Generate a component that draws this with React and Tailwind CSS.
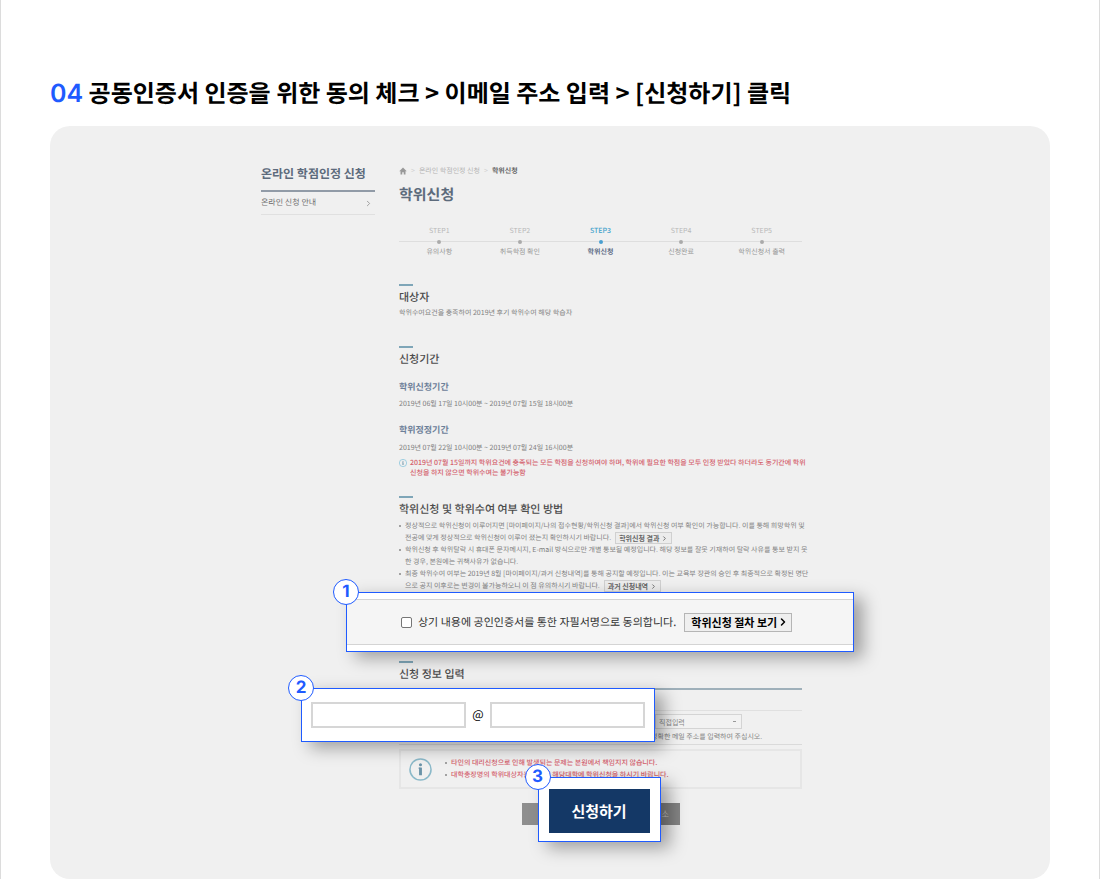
import React from "react";
import { ChevronRight } from "lucide-react";

const steps = [
  { label: "STEP1", name: "유의사항" },
  { label: "STEP2", name: "취득학점 확인" },
  { label: "STEP3", name: "학위신청", active: true },
  { label: "STEP4", name: "신청완료" },
  { label: "STEP5", name: "학위신청서 출력" },
];

function SectionTitle({ children }) {
  return (
    <>
      <div className="h-[2px] w-[14px] bg-[#7fa6b8]" />
      <h3 className="mt-[3px] text-[11px] leading-4 font-medium whitespace-nowrap text-[#4c4c4c]">{children}</h3>
    </>
  );
}

function Badge({ children }) {
  return (
    <span className="absolute -top-[14px] -left-[14px] flex size-[26px] items-center justify-center rounded-full border border-[#1f5bff] bg-white font-[Inter,sans-serif] text-[17px] leading-none font-bold text-[#1f5bff]">
      {children}
    </span>
  );
}

function InlineButton({ children }) {
  return (
    <button
      type="button"
      className="ml-1 inline-flex h-3 items-center gap-[2px] border border-[#d0d0d0] bg-[#ececec] px-[3px] align-top text-[7px] leading-none font-bold text-[#666]"
    >
      {children}
      <ChevronRight size={7} strokeWidth={3} />
    </button>
  );
}

function Bullet({ children }) {
  return (
    <li className="flex gap-1">
      <span className="mt-[5px] size-[2px] shrink-0 rounded-full bg-[#888]" />
      <span>{children}</span>
    </li>
  );
}

function HomeIcon() {
  return (
    <svg viewBox="0 0 16 16" className="size-2 text-[#999]" fill="currentColor" aria-hidden="true">
      <path d="M8 1 0.5 8.5H3V15h3.5v-4.5h3V15H13V8.5h2.5z" />
    </svg>
  );
}

function InfoIcon({ className }) {
  return (
    <svg viewBox="0 0 24 24" className={className} fill="none" aria-hidden="true">
      <circle cx="12" cy="12" r="11" stroke="currentColor" strokeWidth="1.6" />
      <path d="M12 10v8" stroke="#6a93a8" strokeWidth="3" />
      <path d="M10 10.6h2" stroke="#6a93a8" strokeWidth="1.2" />
      <circle cx="12" cy="7" r="1.6" fill="#6a93a8" />
    </svg>
  );
}

export default function App() {
  return (
    <div className="border-x border-[#dcdcdc] bg-white px-[49px] pt-[76px] font-['Noto_Sans_CJK_KR',sans-serif] [text-rendering:geometricPrecision]">
      <h1 className="text-[24px] leading-8 font-bold text-black">
        <span className="font-[Inter,sans-serif] text-[25px] font-semibold text-[#1f5bff]">04</span>{" "}
        공동인증서 인증을 위한 동의 체크 &gt; 이메일 주소 입력 &gt; [신청하기] 클릭
      </h1>

      <div className="mt-4 flex justify-center rounded-[20px] bg-[#f0f0f0] pt-10 pr-[37px] pb-[54px]">
        <div className="flex w-full max-w-[541px] gap-6">
          <aside className="w-[114px] shrink-0">
            <h2 className="border-b-2 border-[#919ba7] pb-2 text-[12px] leading-4 font-bold whitespace-nowrap text-[#5d6b7c]">
              온라인 학점인정 신청
            </h2>
            <a href="#guide" className="flex h-[23px] items-center justify-between border-b border-[#e0e0e0] pr-[2px] text-[8px] text-[#707070]">
              온라인 신청 안내
              <ChevronRight size={9} strokeWidth={2} className="text-[#888]" />
            </a>
          </aside>

          <main className="min-w-0 flex-1 text-[7px] leading-[10px] text-[#808080]">
            <nav className="flex h-[10px] items-center gap-1 text-[#b4b4b4]">
              <HomeIcon />
              <span className="text-[#d0d0d0]">&gt;</span>
              <span>온라인 학점인정 신청</span>
              <span className="text-[#d0d0d0]">&gt;</span>
              <span className="font-bold text-[#666]">학위신청</span>
            </nav>
            <h2 className="mt-[9px] text-[15px] leading-5 font-bold text-[#5d6b7c]">학위신청</h2>

            <ol className="mt-[21px] grid grid-cols-5 text-center">
              {steps.map((s) => (
                <li key={s.label} className="whitespace-nowrap">
                  <div className={s.active ? "font-medium text-[#45a3cc]" : "text-[#b8b8b8]"}>{s.label}</div>
                  <div className="flex h-[11px] items-center">
                    <span className="h-px flex-1 bg-[#dedede]" />
                    <span className={s.active ? "size-1 rounded-full bg-[#4a9fd0]" : "size-1 rounded-full bg-[#aaa]"} />
                    <span className="h-px flex-1 bg-[#dedede]" />
                  </div>
                  <div className={s.active ? "font-bold text-[#5d6b85]" : "text-[#969696]"}>{s.name}</div>
                </li>
              ))}
            </ol>

            <section className="mt-[27px]">
              <SectionTitle>대상자</SectionTitle>
              <p className="mt-[3px]">학위수여요건을 충족하여 2019년 후기 학위수여 해당 학습자</p>
            </section>

            <section className="mt-7">
              <SectionTitle>신청기간</SectionTitle>
              <h4 className="mt-[14px] text-[9px] leading-3 font-bold text-[#6d8099]">학위신청기간</h4>
              <p className="mt-[6px]">2019년 06월 17일 10시00분 ~ 2019년 07월 15일 18시00분</p>
              <h4 className="mt-[15px] text-[9px] leading-3 font-bold text-[#6d8099]">학위정정기간</h4>
              <p className="mt-[7px]">2019년 07월 22일 10시00분 ~ 2019년 07월 24일 16시00분</p>
              <div className="mt-[5px] flex gap-[3px] font-medium text-[#d4616d]">
                <InfoIcon className="mt-px size-2 shrink-0 text-[#5fb4d4]" />
                <p className="whitespace-nowrap">
                  2019년 07월 15일까지 학위요건에 충족되는 모든 학점을 신청하여야 하며, 학위에 필요한 학점을 모두 인정 받았다 하더라도 동기간에 학위
                  <br />
                  신청을 하지 않으면 학위수여는 불가능함
                </p>
              </div>
            </section>

            <section className="mt-[18px]">
              <SectionTitle>학위신청 및 학위수여 여부 확인 방법</SectionTitle>
              <ul className="mt-[3px] leading-3 whitespace-nowrap">
                <Bullet>
                  정상적으로 학위신청이 이루어지면 [마이페이지/나의 접수현황/학위신청 결과]에서 학위신청 여부 확인이 가능합니다. 이를 통해 희망학위 및
                  <br />
                  전공에 맞게 정상적으로 학위신청이 이루어 졌는지 확인하시기 바랍니다.
                  <InlineButton>학위신청 결과</InlineButton>
                </Bullet>
                <Bullet>
                  학위신청 후 학위탈락 시 휴대폰 문자메시지, E-mail 방식으로만 개별 통보될 예정입니다. 해당 정보를 잘못 기재하여 탈락 사유를 통보 받지 못
                  <br />한 경우, 본원에는 귀책사유가 없습니다.
                </Bullet>
                <Bullet>
                  최종 학위수여 여부는 2019년 8월 [마이페이지/과거 신청내역]를 통해 공지할 예정입니다. 이는 교육부 장관의 승인 후 최종적으로 확정된 명단
                  <br />
                  으로 공지 이후로는 변경이 불가능하오니 이 점 유의하시기 바랍니다.
                  <InlineButton>과거 신청내역</InlineButton>
                </Bullet>
              </ul>
            </section>

            <div className="relative h-[60px]">
              <div className="absolute top-0 -left-[53px] z-10 w-[508px] border border-[#1f5bff] bg-white py-[6px] shadow-[9px_6px_16px_rgba(0,0,0,0.34)]">
                <Badge>1</Badge>
                <div className="flex h-[46px] items-center border-y border-[#d4d4d4] bg-[#f5f5f5] pl-[54px] text-[#333]">
                  <input
                    id="agree"
                    type="checkbox"
                    className="size-[11px] appearance-none rounded-[2px] border border-[#767676] bg-white"
                  />
                  <label htmlFor="agree" className="ml-[6px] text-[11px] whitespace-nowrap">
                    상기 내용에 공인인증서를 통한 자필서명으로 동의합니다.
                  </label>
                  <button
                    type="button"
                    className="ml-2 flex h-[19px] items-center border border-[#b5b5b5] bg-[#efefef] px-[6px] text-[11px] leading-none font-bold whitespace-nowrap text-black"
                  >
                    학위신청 절차 보기
                    <ChevronRight size={12} strokeWidth={3} className="-mr-1" />
                  </button>
                </div>
              </div>
            </div>

            <section className="mt-[9px]">
              <SectionTitle>신청 정보 입력</SectionTitle>
              <div className="relative mt-[6px] border-t-2 border-b border-t-[#9fb0ba] border-b-[#dadada] pt-5">
                <div className="border-t border-[#e0e0e0] pt-[3px] pb-[2px] pl-[256px]">
                  <select
                    aria-label="메일 도메인"
                    className="block h-[15px] w-[87px] appearance-none border border-[#d4d4d4] bg-[#f2f2f2] bg-[linear-gradient(#999,#999)] bg-[length:3px_1px] bg-[position:right_5px_center] bg-no-repeat pl-[3px] text-[7px] leading-[10px] text-[#888]"
                  >
                    <option>직접입력</option>
                  </select>
                  <p className="mt-[3px] -ml-1 whitespace-nowrap">정확한 메일 주소를 입력하여 주십시오.</p>
                </div>
                <div className="absolute -top-[2px] -left-[98px] z-10 flex h-[54px] w-[354px] items-center justify-between border border-[#1f5bff] bg-white px-[9px] shadow-[9px_6px_16px_rgba(0,0,0,0.34)]">
                  <Badge>2</Badge>
                  <input type="text" aria-label="이메일 아이디" className="h-[26px] w-[155px] border-2 border-[#d6d6d6] bg-white px-1 text-xs text-black" />
                  <span className="text-[12px] text-black">@</span>
                  <input type="text" aria-label="이메일 도메인" className="h-[26px] w-[155px] border-2 border-[#d6d6d6] bg-white px-1 text-xs text-black" />
                </div>
              </div>

              <div className="mt-1 flex h-10 items-center gap-[13px] border-2 border-[#e6e6e6] pl-2 font-medium text-[#d4616d]">
                <InfoIcon className="size-[23px] text-[#8bb9c9]" />
                <ul className="leading-3 whitespace-nowrap">
                  <Bullet>타인의 대리신청으로 인해 발생되는 문제는 본원에서 책임지지 않습니다.</Bullet>
                  <Bullet>대학총장명의 학위대상자는 반드시 해당대학에 학위신청을 하시기 바랍니다.</Bullet>
                </ul>
              </div>

              <div className="relative mx-auto mt-[14px] flex h-[22px] w-[158px] justify-between">
                <span className="w-9 bg-[#8e8e8e]" />
                <button type="button" className="w-9 bg-[#858585] text-[8px] leading-[10px] text-[#ccc]">
                  취소
                </button>
                <div className="absolute -top-[26px] left-4 z-10 border border-[#1f5bff] bg-white px-[10px] pt-[11px] pb-2 shadow-[9px_6px_16px_rgba(0,0,0,0.34)]">
                  <Badge>3</Badge>
                  <button type="button" className="block h-11 w-[101px] bg-[#143866] text-[15px] font-bold text-white">
                    신청하기
                  </button>
                </div>
              </div>
            </section>
          </main>
        </div>
      </div>
    </div>
  );
}
